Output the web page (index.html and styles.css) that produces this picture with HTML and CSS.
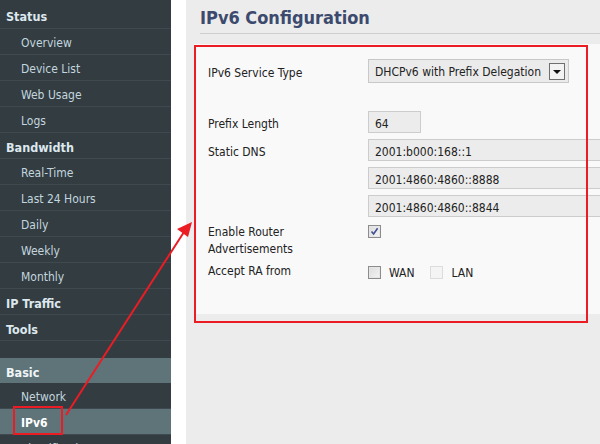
FILE: index.html
```html
<!DOCTYPE html>
<html>
<head>
<meta charset="utf-8">
<link rel="stylesheet" href="styles.css">
</head>
<body>
<div class="page">
  <nav class="sidebar">
    <div class="hdr first">Status</div>
    <div class="item">Overview</div>
    <div class="item">Device List</div>
    <div class="item">Web Usage</div>
    <div class="item">Logs</div>
    <div class="hdr">Bandwidth</div>
    <div class="item">Real-Time</div>
    <div class="item">Last 24 Hours</div>
    <div class="item">Daily</div>
    <div class="item">Weekly</div>
    <div class="item">Monthly</div>
    <div class="hdr">IP Traffic</div>
    <div class="hdr">Tools</div>
    <div class="spacer"></div>
    <div class="hdr open">Basic</div>
    <div class="item">Network</div>
    <div class="item active">IPv6</div>
    <div class="item">Identification</div>
  </nav>
  <div class="gutter"></div>
  <main class="content">
    <h1 class="title">IPv6 Configuration</h1>
    <section class="panel">
      <div class="row r-type">
        <div class="label">IPv6 Service Type</div>
        <div class="select">
          <span class="select-text">DHCPv6 with Prefix Delegation</span>
          <span class="select-btn"><span class="tri"></span></span>
        </div>
      </div>
      <div class="row r-prefix">
        <div class="label">Prefix Length</div>
        <div class="input short">64</div>
      </div>
      <div class="row r-dns">
        <div class="label">Static DNS</div>
        <div class="input-stack">
          <div class="input long">2001:b000:168::1</div>
          <div class="input long">2001:4860:4860::8888</div>
          <div class="input long">2001:4860:4860::8844</div>
        </div>
      </div>
      <div class="row r-ra">
        <div class="label">Enable Router<br>Advertisements</div>
        <span class="cb checked"><svg viewBox="0 0 9 9" width="9" height="9"><path d="M1.5 4.5 L3.6 7 L7.6 1.2" fill="none" stroke="#3f4f94" stroke-width="1.6"/></svg></span>
      </div>
      <div class="row r-accept">
        <div class="label">Accept RA from</div>
        <div class="opts">
          <span class="cb"></span><span class="opt-text">WAN</span>
          <span class="cb disabled"></span><span class="opt-text">LAN</span>
        </div>
      </div>
    </section>
  </main>
  <svg class="annot" width="600" height="444" viewBox="0 0 600 444">
    <rect x="195" y="46" width="392" height="276" fill="none" stroke="#ec1c24" stroke-width="2"/>
    <rect x="14" y="407" width="48" height="27" fill="none" stroke="#ec1c24" stroke-width="2"/>
    <line x1="66" y1="415" x2="184" y2="232" stroke="#ec1c24" stroke-width="2"/>
    <polygon points="192,222 177,229 188,237" fill="#ec1c24"/>
  </svg>
</div>
</body>
</html>
```
FILE: styles.css
```css
html, body {
  margin: 0;
  padding: 0;
}
body {
  width: 600px;
  height: 444px;
  overflow: hidden;
  font-family: "DejaVu Sans Condensed", "DejaVu Sans", sans-serif;
  font-stretch: condensed;
  font-size: 12px;
  color: #222;
  background: #ececec;
}
.page {
  position: relative;
  display: flex;
  width: 600px;
  height: 444px;
  overflow: hidden;
}
.sidebar {
  width: 171px;
  flex: 0 0 171px;
  background: #323c41;
  display: flex;
  flex-direction: column;
}
.hdr, .item {
  height: 26px;
  box-sizing: border-box;
  border-bottom: 1px solid #3e4a50;
  display: flex;
  align-items: center;
  flex: 0 0 auto;
  padding-top: 3px;
}
.hdr {
  padding-left: 6px;
  font-weight: bold;
  color: #dde8ee;
  font-size: 12.5px;
}
.hdr.first {
  height: 29px;
  padding-top: 4px;
}
.item {
  padding-left: 21px;
  color: #c3d6df;
}
.spacer {
  height: 17px;
  flex: 0 0 auto;
}
.hdr.open {
  background: #5e7479;
  border-bottom: none;
  height: 25px;
  color: #f0f5f7;
}
.item.active {
  background: #5e7479;
  color: #ffffff;
  font-weight: bold;
}
.gutter {
  width: 15px;
  flex: 0 0 15px;
  background: #ffffff;
}
.content {
  flex: 1 1 auto;
  background: #ececec;
  min-width: 0;
}
.title {
  margin: 0 0 0 14px;
  height: 34px;
  box-sizing: border-box;
  padding-top: 7px;
  border-bottom: 1px solid #cfcfcf;
  font-size: 18px;
  font-weight: bold;
  color: #3b4a6d;
  line-height: 22px;
}
.panel {
  margin: 10px 0 0 8px;
  width: 420px;
  height: 270px;
  box-sizing: border-box;
  background: #f9f9f9;
  padding: 15px 0 0 14px;
}
.row {
  display: flex;
  align-items: center;
}
.label {
  width: 160px;
  flex: 0 0 160px;
  line-height: 17px;
  padding-top: 4px;
}
.r-prefix {
  margin-top: 28px;
}
.r-dns {
  margin-top: 6px;
  align-items: flex-start;
}
.r-dns .label {
  padding-top: 5px;
}
.input-stack {
  display: flex;
  flex-direction: column;
  gap: 6px;
}
.select {
  width: 201px;
  height: 24px;
  box-sizing: border-box;
  border: 1px solid #c8c8c8;
  background: #ebebeb;
  display: flex;
  align-items: center;
  justify-content: space-between;
  padding: 0 3px 0 6px;
}
.select-text {
  padding-top: 2px;
}
.select-btn {
  width: 16px;
  height: 17px;
  box-sizing: border-box;
  border: 1px solid #6f6f6f;
  background: #f3f3f3;
  display: flex;
  align-items: center;
  justify-content: center;
}
.tri {
  width: 0;
  height: 0;
  border-left: 4px solid transparent;
  border-right: 4px solid transparent;
  border-top: 4px solid #111;
  margin-top: 1px;
}
.input {
  height: 22px;
  box-sizing: border-box;
  border: 1px solid #cccccc;
  background: #ececec;
  padding: 3px 0 0 6px;
  display: flex;
  align-items: center;
}
.input.short {
  width: 53px;
}
.input.long {
  width: 270px;
}
.r-ra {
  margin-top: 5px;
  align-items: flex-start;
}
.r-ra .label {
  padding-top: 2px;
}
.r-ra .cb {
  margin-top: 3px;
}
.r-accept {
  margin-top: 3px;
  align-items: flex-start;
}
.r-accept .label {
  padding-top: 2px;
}
.r-accept .opts {
  margin-top: 3px;
}
.cb {
  width: 13px;
  height: 13px;
  box-sizing: border-box;
  border: 1px solid #8c8c8c;
  background: linear-gradient(135deg, #dcdcdc, #f4f4f4);
  box-shadow: inset 0 0 0 1px #e6e6e6;
  display: inline-flex;
  align-items: center;
  justify-content: center;
  flex: 0 0 13px;
}
.cb.disabled {
  border-color: #dcdcdc;
  background: #f4f4f4;
  box-shadow: none;
}
.opts {
  display: flex;
  align-items: center;
}
.opt-text {
  margin-left: 8px;
  margin-right: 16px;
  padding-top: 2px;
}
.annot {
  position: absolute;
  left: 0;
  top: 0;
  pointer-events: none;
}
```
